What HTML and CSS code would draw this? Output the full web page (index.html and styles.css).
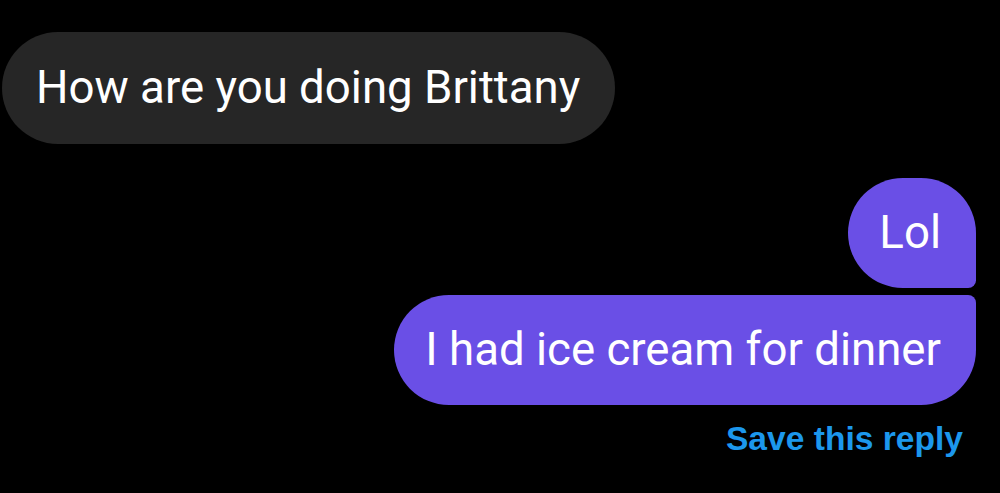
FILE: index.html
```html
<!DOCTYPE html>
<html>
<head>
<meta charset="utf-8">
<link rel="stylesheet" href="styles.css">
</head>
<body>
<div class="chat">
  <div class="row row-in">
    <div class="bubble in">How are you doing Brittany</div>
  </div>
  <div class="group-out">
    <div class="bubble out out-first">Lol</div>
    <div class="bubble out out-last">I had ice cream for dinner</div>
    <div class="save">Save this reply</div>
  </div>
</div>
</body>
</html>
```

FILE: styles.css
```css
html, body {
  margin: 0;
  padding: 0;
  background: #000;
  width: 1000px;
  height: 493px;
  overflow: hidden;
}
.chat {
  font-family: Roboto, "Liberation Sans", sans-serif;
  display: flex;
  flex-direction: column;
  padding: 32px 24px 0 2px;
}
.row-in {
  display: flex;
}
.bubble {
  font-size: 45.6px;
  line-height: 52px;
  color: #fff;
  padding: 30px 35px 30px 34px;
  border-radius: 56px;
  white-space: nowrap;
}
.in {
  background: #262626;
}
.group-out {
  display: flex;
  flex-direction: column;
  align-items: flex-end;
  margin-top: 34px;
  gap: 7px;
}
.out {
  background: #6a4fe6;
  padding: 29px 35px 29px 31px;
}
.out-first {
  border-bottom-right-radius: 8px;
}
.out-last {
  border-top-right-radius: 8px;
}
.save {
  font-family: "Liberation Sans", Arial, sans-serif;
  color: #1c97ec;
  font-weight: 700;
  font-size: 33.6px;
  line-height: 36px;
  margin-top: 9px;
  margin-right: 13px;
}
```
